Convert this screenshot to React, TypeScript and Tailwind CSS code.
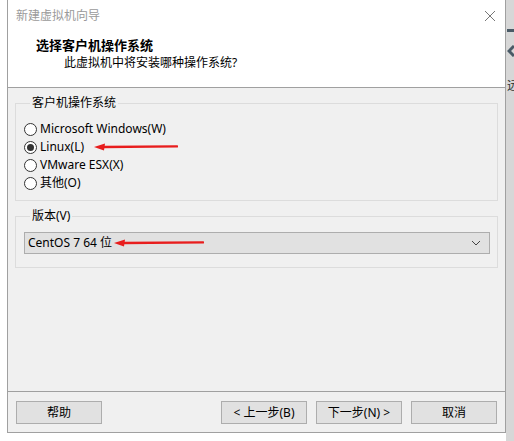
import React from "react";

const font = { fontFamily: '"Noto Sans", "Noto Sans CJK SC", sans-serif' };

function Radio({ label, checked }: { label: string; checked?: boolean }) {
  return (
    <div className="flex h-[18px] items-center">
      <span className="flex h-[13px] w-[13px] items-center justify-center rounded-full border border-[#333333] bg-white">
        {checked && <span className="h-[7px] w-[7px] rounded-full bg-[#333333]" />}
      </span>
      <span className="ml-[3px] text-[12px] leading-[18px] text-black">{label}</span>
    </div>
  );
}

function RedArrow({ width }: { width: number }) {
  return (
    <svg width={width} height="8" viewBox={`0 0 ${width} 8`} className="block">
      <path d={`M10 4 L${width - 1} 3.4`} stroke="#e81d1d" strokeWidth="2.4" strokeLinecap="round" />
      <path d="M0 4 L11 0.5 L10 7.5 Z" fill="#e81d1d" />
    </svg>
  );
}

function Btn({ children }: { children: React.ReactNode }) {
  return (
    <button className="flex h-[23px] w-[86px] items-center justify-center border border-[#adadad] bg-[#e1e1e1] text-[12px] text-black">
      {children}
    </button>
  );
}

export default function App() {
  return (
    <div className="flex h-[441px] w-[514px] overflow-hidden bg-white" style={font}>
      <div className="ml-[7px] flex h-[433px] w-[499px] shrink-0 flex-col border-x border-b border-[#a0a0a0] bg-[#f0f0f0]">
        <div className="h-[88px] border-b border-[#a0a0a0] bg-white">
          <div className="flex h-[31px] items-center justify-between pl-[8px] pr-[9px]">
            <span className="text-[12px] text-[#9a9a9a]">新建虚拟机向导</span>
            <svg width="12" height="12" viewBox="0 0 12 12">
              <path d="M1 1 L11 11 M11 1 L1 11" stroke="#777" strokeWidth="1" />
            </svg>
          </div>
          <div className="pl-[28px] pt-[6px] text-[13px] font-bold leading-[17px] text-black">选择客户机操作系统</div>
          <div className="pl-[56px] text-[12px] leading-[17px] text-black">此虚拟机中将安装哪种操作系统?</div>
        </div>

        <div className="flex flex-1 flex-col px-[7px]">
          <fieldset className="mt-[7px] h-[106px] border border-[#dcdcdc] pl-[8px]">
            <legend className="ml-[6px] px-[2px] text-[12px] leading-[16px] text-black">客户机操作系统</legend>
            <div className="mt-[9px] flex flex-col">
              <Radio label="Microsoft Windows(W)" />
              <div className="flex items-center">
                <Radio label="Linux(L)" checked />
                <div className="ml-[10px]">
                  <RedArrow width={84} />
                </div>
              </div>
              <Radio label="VMware ESX(X)" />
              <Radio label="其他(O)" />
            </div>
          </fieldset>

          <fieldset className="mt-[7px] h-[60px] border border-[#dcdcdc] pl-[8px] pr-[7px]">
            <legend className="ml-[6px] px-[2px] text-[12px] leading-[16px] text-black">版本(V)</legend>
            <div className="mt-[8px] flex h-[22px] items-center justify-between border border-[#adadad] bg-[#e1e1e1] pl-[3px] pr-[8px]">
              <div className="flex items-center">
                <span className="text-[12px] text-black">CentOS 7 64 位</span>
                <div className="ml-[2px]">
                  <RedArrow width={90} />
                </div>
              </div>
              <svg width="10" height="6" viewBox="0 0 10 6">
                <path d="M1 1 L5 5 L9 1" stroke="#444" strokeWidth="1" fill="none" />
              </svg>
            </div>
          </fieldset>
        </div>

        <div className="h-[41px] border-t border-[#a0a0a0]">
          <div className="mt-[9px] flex items-center px-[8px]">
            <Btn>帮助</Btn>
            <div className="flex-1" />
            <Btn>&lt; 上一步(B)</Btn>
            <div className="w-[9px]" />
            <Btn>下一步(N) &gt;</Btn>
            <div className="w-[9px]" />
            <Btn>取消</Btn>
          </div>
        </div>
      </div>

      <div className="flex h-full min-w-0 flex-1 flex-col overflow-hidden bg-[#d7d7d7]">
        <div className="mt-[29px] ml-[1px] h-[3px] w-[8px] shrink-0 bg-[#4a5a66]" />
        <svg width="8" height="12" viewBox="0 0 8 12" className="mt-[13px] ml-[1px] shrink-0">
          <path d="M7 1 L2 6 L7 11" stroke="#4a5a66" strokeWidth="3" fill="none" />
        </svg>
        <div className="mt-[22px] ml-[1px] whitespace-nowrap text-[12px] leading-[14px] text-[#333]">远</div>
      </div>
    </div>
  );
}
